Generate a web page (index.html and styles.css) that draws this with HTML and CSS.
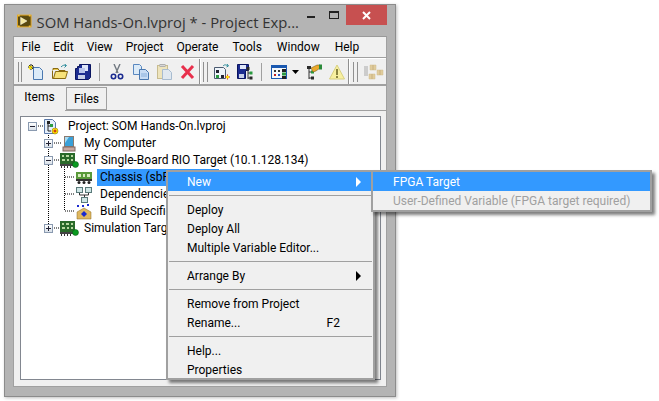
FILE: index.html
```html
<!DOCTYPE html>
<html lang="en">
<head>
    <meta charset="UTF-8">
    <meta name="viewport" content="width=device-width, initial-scale=1.0">
    <title>SOM Hands-On.lvproj</title>
    <link rel="stylesheet" href="styles.css">
</head>
<body>
    <div class="window">
        <div class="titlebar">
            <svg class="app-icon" width="16" height="16" viewBox="0 0 16 16">
                <rect x="0.5" y="1.5" width="15" height="13" fill="#5a4a10" stroke="#e6a820"/>
                <path d="M4 4l7 4-7 4z" fill="#f4e8a0" stroke="#fff" stroke-width="0.5"/>
                <path d="M1 1h2v2H1zM13 1h2v2h-2zM1 13h2v2H1zM13 13h2v2h-2z" fill="#f0c040"/>
            </svg>
            <div class="title">SOM Hands-On.lvproj * - Project Exp...</div>
            <div class="win-btn"><span class="min-glyph"></span></div>
            <div class="win-btn"><span class="max-glyph"></span></div>
            <div class="close-btn">
                <svg width="9" height="9" viewBox="0 0 9 9"><path d="M1 1l7 7M8 1l-7 7" stroke="#fff" stroke-width="2"/></svg>
            </div>
        </div>
        <div class="client">
            <div class="menubar">
                <span>File</span><span>Edit</span><span>View</span><span>Project</span><span>Operate</span><span>Tools</span><span>Window</span><span>Help</span>
            </div>
            <div class="toolbar">
                <span class="grip"></span>
                <span class="tool"><svg width="16" height="16" viewBox="0 0 16 16"><path d="M5.5 3.5h6l3 3v9h-9z" fill="#dcebf8" stroke="#4a78b0"/><path d="M0 3h6M3 0v6M1 1l4 4M5 1L1 5" stroke="#111"/><path d="M1 2l3 3M4 2L1 5" stroke="#ffe800" stroke-width="1.2"/></svg></span>
                <span class="tool"><svg width="16" height="16" viewBox="0 0 16 16"><path d="M0.500 6.500v8h13l2-7h-12l-2 7" fill="#f7e27a" stroke="#8a6a10"/><path d="M1 6V4.500h5l1 2h6V6" fill="#e8c850" stroke="#8a6a10"/><path d="M9 3c2-2 3-2 5-1.500M12.500 0l2 1.500-2 2" fill="none" stroke="#2a8a9a"/></svg></span>
                <span class="tool"><svg width="16" height="16" viewBox="0 0 16 16"><path d="M0.500 4.500h2v-2h2v-2h11v13l-2 2h-13z" fill="#1c2c90" stroke="#0a1560"/><rect x="7" y="1" width="6" height="6" fill="#dfe6f8"/><rect x="4" y="4" width="6" height="5" fill="#b8c4ec"/><rect x="3" y="11" width="7" height="4" fill="#c8d0e8"/></svg></span>
                <span class="tool-sep"></span>
                <span class="tool"><svg width="16" height="16" viewBox="0 0 16 16"><path d="M5 0l4 9M11 0L7 9" stroke="#707880" stroke-width="1.400"/><circle cx="4.500" cy="12.500" r="2.200" fill="none" stroke="#1a2a90" stroke-width="1.600"/><circle cx="11.500" cy="12.500" r="2.200" fill="none" stroke="#1a2a90" stroke-width="1.600"/></svg></span>
                <span class="tool"><svg width="16" height="16" viewBox="0 0 16 16"><path d="M0.500 0.500h6l2 2v8h-8z" fill="#dcebf8" stroke="#5a88c0"/><path d="M6.500 5.500h6l3 3v7h-9z" fill="#c8dcf4" stroke="#4a78b0"/><path d="M8 10h6M8 12h6" stroke="#8ab0dc"/></svg></span>
                <span class="tool"><svg width="16" height="16" viewBox="0 0 16 16"><rect x="1.500" y="1.500" width="10" height="13" fill="#eee4bc" stroke="#c8bc90"/><rect x="4" y="0.500" width="5" height="2" fill="#d8d8d8" stroke="#b0b0b0"/><path d="M6.500 5.500h6l3 3v7h-9z" fill="#e0e8f0" stroke="#a8bcd0"/></svg></span>
                <span class="tool"><svg width="16" height="16" viewBox="0 0 16 16"><path d="M2 2l11 12M13 2L2 14" stroke="#e8304c" stroke-width="3"/></svg></span>
                <span class="bar-end"></span>
                <span class="grip"></span>
                <span class="tool"><svg width="16" height="16" viewBox="0 0 16 16"><path d="M0.500 3.500h9l2 2v9h-11z" fill="#eef4fa" stroke="#4a5a70"/><rect x="2" y="6" width="3" height="3" fill="#223"/><rect x="2" y="11" width="3" height="3" fill="#2a9a40"/><rect x="7" y="11" width="3" height="3" fill="#223"/><path d="M9 2c2-2 3-1 5 0M13 0l1.500 2-2 1" fill="none" stroke="#2a8a9a"/><path d="M11 13h5M13.500 10.500v5" stroke="#d02020"/><circle cx="13.500" cy="13" r="1.500" fill="#ffe800"/></svg></span>
                <span class="tool"><svg width="16" height="16" viewBox="0 0 16 16"><path d="M0.500 0.500h11v6h-3v8h-8z" fill="#1c2c90" stroke="#0a1560"/><rect x="3" y="1" width="6" height="4" fill="#dfe6f8"/><rect x="2" y="10" width="5" height="4" fill="#c8d0e8"/><path d="M11 5v10M11 9h3M11 14h3" stroke="#333"/><rect x="9.500" y="3" width="3" height="3" fill="#2a2a2a"/><rect x="12.500" y="7.500" width="3" height="3" fill="#2a9a40"/><rect x="12.500" y="12.500" width="3" height="3" fill="#2a2a2a"/></svg></span>
                <span class="tool-sep"></span>
                <span class="tool wide"><svg width="16" height="16" viewBox="0 0 16 16"><rect x="0.500" y="1.500" width="15" height="13" fill="#f4f8fc" stroke="#1a58b0"/><rect x="1" y="2" width="14" height="2" fill="#1a58b0"/><path d="M3 6h2v2H3zM7 6h2v2H7z" fill="#333"/><path d="M3 10h2v2H3z" fill="#c02020"/><path d="M7 10h2v2H7z" fill="#2050c0"/><rect x="11" y="5" width="4" height="3" fill="#222"/><rect x="11" y="8.500" width="4" height="3" fill="#2a9a40"/><rect x="11" y="12" width="4" height="3" fill="#222"/></svg><svg class="drop" width="7" height="4" viewBox="0 0 7 4"><path d="M0 0h7L3.500 4z" fill="#000"/></svg></span>
                <span class="tool"><svg width="16" height="16" viewBox="0 0 16 16"><path d="M3 3v12M3 8h3M3 14h3" stroke="#333"/><rect x="1" y="2" width="4" height="3" fill="#2a2a2a"/><rect x="5" y="6.500" width="3" height="3" fill="#2a9a40"/><rect x="5" y="12.500" width="3" height="3" fill="#2a2a2a"/><path d="M5 4l6-3h3v3l-4 3-3 1z" fill="#eaa82a" stroke="#6a5010" stroke-width="0.500"/><rect x="13" y="0.500" width="3" height="5" fill="#2a8a3a"/></svg></span>
                <span class="tool"><svg width="16" height="16" viewBox="0 0 16 16"><path d="M8 1L15.500 15H0.500z" fill="#f8f0a0" stroke="#d8d080"/><path d="M8 5v6" stroke="#8a8440" stroke-width="2"/><path d="M7 12h2v2H7z" fill="#8a8440"/></svg></span>
                <span class="bar-end"></span>
                <span class="grip"></span>
                <span class="tool"><svg width="20" height="16" viewBox="0 0 20 16"><path d="M0 3h4M0 5h4M0 7h4M0 9h4M0 11h4" stroke="#a8a8a8"/><path d="M6 1h6v5H6zM13 6h6v5h-6zM5 10h6v5H5z" fill="#e0cc9c" stroke="#d0bc8c" stroke-width="0.500"/><path d="M9 1v5M16 6v5M8 10v5" stroke="#c8b080"/></svg></span>
            </div>
            <div class="tabs">
                <span class="tab active">Items</span>
                <span class="tab">Files</span>
            </div>
            <div class="panel">
                <div class="tree">
                    <svg class="tree-lines" width="90" height="130" viewBox="0 0 90 130">
                        <path d="M27.500 16v95M43.500 50v44M17 9h7M33 26h7M33 43h7M33 111h7M44 60h10M44 77h10M44 94h10" fill="none" stroke="#000" stroke-dasharray="1 1"/>
                    </svg>
                    <div class="row lvl0"><span class="exp minus"></span>
                        <svg class="ico" width="15" height="16" viewBox="0 0 15 16"><path d="M0.500 0.500h8l3 3v11h-11z" fill="#e4eefa" stroke="#5a78a8"/><path d="M4 3v9M4 7h3M4 12h3" stroke="#222"/><rect x="3" y="2" width="3" height="3" fill="#222"/><rect x="6" y="5" width="3" height="3" fill="#2a9a40"/><circle cx="11" cy="12" r="3" fill="#ffe800" stroke="#806000" stroke-width="0.500"/><path d="M9.500 12h3M11 10.500v3" stroke="#c01010"/></svg>
                        <span class="label">Project: SOM Hands-On.lvproj</span></div>
                    <div class="row lvl1"><span class="exp plus"></span>
                        <svg class="ico pc" width="14" height="16" viewBox="0 0 14 16"><rect x="2.500" y="0.500" width="9" height="10" fill="#3aa0d8" stroke="#8a7a70"/><path d="M3 1h4L3 7z" fill="#a8dcf4"/><rect x="1" y="11" width="12" height="4" fill="#c8a8a0" stroke="#806860"/></svg>
                        <span class="label">My Computer</span></div>
                    <div class="row lvl1"><span class="exp minus"></span>
                        <svg class="ico chip" width="19" height="17" viewBox="0 0 19 17"><rect x="0" y="1" width="15" height="11" fill="#2a6a2a"/><path d="M2 3h2v2H2zM6 3h3v2H6zM11 3h2v2h-2zM2 7h3v2H2zM7 7h2v2H7zM11 7h2v2h-2z" fill="#b8d8a0"/><path d="M0 12h15v2H0z" fill="#444"/><path d="M1 14h1v2H1zM4 14h1v2H4zM7 14h1v2H7zM10 14h1v2h-1z" fill="#333"/><circle cx="15.500" cy="12.500" r="3" fill="#0a9a20" stroke="#065010" stroke-width="0.500"/></svg>
                        <span class="label">RT Single-Board RIO Target (10.1.128.134)</span></div>
                    <div class="row lvl2">
                        <svg class="ico" width="16" height="14" viewBox="0 0 16 14"><rect x="0" y="1" width="16" height="7" fill="#5a9a3a"/><path d="M2 3h3v3H2zM7 3h2v3H7zM11 3h3v3h-3z" fill="#d8ecc0"/><rect x="0" y="8" width="16" height="2" fill="#333"/><circle cx="3" cy="11.500" r="1.500" fill="#222"/><circle cx="8" cy="11.500" r="1.500" fill="#222"/><circle cx="13" cy="11.500" r="1.500" fill="#222"/></svg>
                        <span class="label selected">Chassis (sbRIO-9636)</span></div>
                    <div class="row lvl2">
                        <svg class="ico" width="16" height="16" viewBox="0 0 16 16"><rect x="0.500" y="0.500" width="6" height="5" fill="#cfe6e6" stroke="#5a7a7a"/><rect x="9.500" y="0.500" width="6" height="5" fill="#cfe6e6" stroke="#5a7a7a"/><rect x="5.500" y="10.500" width="6" height="5" fill="#cfe6e6" stroke="#5a7a7a"/><path d="M3.500 6v2h9V6M8.500 8v2" fill="none" stroke="#333"/></svg>
                        <span class="label">Dependencies</span></div>
                    <div class="row lvl2">
                        <svg class="ico" width="16" height="16" viewBox="0 0 16 16"><path d="M1 1h2v2H1zM6 1h2v2H6zM11 0h2v2h-2z" fill="#1a2ad0"/><path d="M1 8l7-4 7 4v7H1z" fill="#e0b860" stroke="#8a6a20" stroke-width="0.500"/><path d="M8 7l3 3-3 3-3-3z" fill="#1a2ad0"/></svg>
                        <span class="label">Build Specifications</span></div>
                    <div class="row lvl1"><span class="exp plus"></span>
                        <svg class="ico chip" width="19" height="17" viewBox="0 0 19 17"><rect x="0" y="1" width="15" height="11" fill="#2a6a2a"/><path d="M2 3h2v2H2zM6 3h3v2H6zM11 3h2v2h-2zM2 7h3v2H2zM7 7h2v2H7zM11 7h2v2h-2z" fill="#b8d8a0"/><path d="M0 12h15v2H0z" fill="#444"/><path d="M1 14h1v2H1zM4 14h1v2H4zM7 14h1v2H7zM10 14h1v2h-1z" fill="#333"/><circle cx="15.500" cy="12.500" r="3" fill="#0a9a20" stroke="#065010" stroke-width="0.500"/></svg>
                        <span class="label">Simulation Target</span></div>
                </div>
            </div>
        </div>
    </div>

    <div class="menu context-menu">
        <div class="item hot"><span>New</span><span class="arrow"></span></div>
        <hr>
        <div class="item">Deploy</div>
        <div class="item">Deploy All</div>
        <div class="item">Multiple Variable Editor...</div>
        <hr>
        <div class="item"><span>Arrange By</span><span class="arrow"></span></div>
        <hr>
        <div class="item">Remove from Project</div>
        <div class="item"><span>Rename...</span><span class="key">F2</span></div>
        <hr>
        <div class="item">Help...</div>
        <div class="item">Properties</div>
    </div>
    <div class="menu sub-menu">
        <div class="item hot">FPGA Target</div>
        <div class="item off">User-Defined Variable (FPGA target required)</div>
    </div>
</body>
</html>
```
FILE: styles.css
```css
body {
    margin: 0;
    background: #fff;
    font-family: Roboto, "Open Sans", sans-serif;
    font-size: 12px;
    color: #000;
}

.window {
    width: 392px;
    height: 393px;
    margin: 4px;
    box-sizing: border-box;
    background: #b4b4b4;
    border: 1px solid #8c8c8c;
    box-shadow: 1px 1px 3px rgba(0, 0, 0, 0.25);
    display: flex;
    flex-direction: column;
    padding: 0 8px 9px;
}

.titlebar {
    height: 31px;
    flex: none;
    display: flex;
    align-items: flex-start;
}

.app-icon {
    margin: 8px 0 0 4px;
}

.title {
    flex: 1;
    font-family: "Open Sans", sans-serif;
    font-size: 14.8px;
    line-height: 20px;
    margin: 7px 0 0 5px;
    color: #333;
    white-space: nowrap;
}

.win-btn {
    width: 26px;
    height: 20px;
    display: flex;
    align-items: center;
    justify-content: center;
}

.min-glyph {
    width: 8px;
    height: 2px;
    margin-top: 4px;
    background: #222;
}

.max-glyph {
    width: 8px;
    height: 5px;
    border: 1px solid #222;
    border-top-width: 2px;
}

.close-btn {
    width: 45px;
    height: 20px;
    background: #c75050;
    display: flex;
    align-items: center;
    justify-content: center;
}

.client {
    flex: 1;
    background: #f0f0f0;
    border: 1px solid #a0a0a0;
    border-top-color: #999;
    display: flex;
    flex-direction: column;
}

.menubar {
    height: 20px;
    padding-left: 1px;
    display: flex;
    align-items: center;
    border-bottom: 1px solid #a0a0a0;
    box-shadow: 0 1px 0 #fff;
}

.menubar span {
    padding: 0 6.5px;
}

.menubar span:nth-child(n+6) {
    padding: 0 7.5px;
}

.toolbar {
    height: 25px;
    margin-top: 1px;
    display: flex;
    align-items: center;
    border-bottom: 2px solid #a0a0a0;
}

.grip {
    width: 3px;
    height: 20px;
    margin: 0 5px 0 4px;
    border-left: 1px solid #909090;
    border-right: 1px solid #909090;
}

.tool {
    width: 23.5px;
    display: flex;
    align-items: center;
    flex: none;
    padding-left: 1px;
    box-sizing: border-box;
}

.tool.wide {
    width: 35px;
}

.drop {
    margin-left: 5px;
}

.tool-sep {
    width: 1px;
    height: 18px;
    background: #a0a0a0;
    margin: 0 8px 0 1.5px;
}

.bar-end {
    width: 1px;
    height: 25px;
    background: #909090;
    margin-left: -3.5px;
    box-shadow: 1px 0 0 #fff;
}

.tabs {
    display: flex;
    align-items: flex-start;
    height: 24px;
    flex: none;
}

.tab {
    height: 23px;
    width: 41px;
    margin-top: 1px;
    box-sizing: border-box;
    border: 1px solid #a0a0a0;
    background: #f0f0f0;
    display: flex;
    align-items: center;
    justify-content: center;
    margin-left: 1px;
}

.tab.active {
    width: 51px;
    height: 25px;
    margin-top: 0;
    margin-left: 0;
    padding-bottom: 3px;
    border: 0;
    position: relative;
}

.panel {
    flex: 1;
    border-top: 1px solid #a0a0a0;
    padding: 5px 5px 6px 6px;
    display: flex;
}

.tree {
    flex: 1;
    position: relative;
    background: #fff;
    border: 1px solid #828790;
    padding-top: 1px;
}

.tree-lines {
    position: absolute;
    left: 0;
    top: 0;
}

.row {
    height: 17px;
    display: flex;
    align-items: center;
    white-space: nowrap;
    position: relative;
}

.lvl0 {
    padding-left: 7px;
}

.lvl1 {
    padding-left: 23px;
}

.lvl2 {
    padding-left: 55px;
}

.exp {
    width: 9px;
    height: 9px;
    box-sizing: border-box;
    border: 1px solid #8a9ab0;
    background: linear-gradient(#fff, #d8e0e8);
    position: relative;
    margin-right: 7px;
    flex: none;
}

.exp::before {
    content: "";
    position: absolute;
    left: 1px;
    top: 3px;
    width: 5px;
    height: 1px;
    background: #223;
}

.exp.plus::after {
    content: "";
    position: absolute;
    left: 3px;
    top: 1px;
    width: 1px;
    height: 5px;
    background: #223;
}

.ico {
    flex: none;
    background: #fff;
}

.pc {
    margin-left: 2px;
}

.label {
    padding: 0 2px;
    line-height: 17px;
}

.lvl0 .label {
    margin-left: 7px;
}

.lvl1 .label {
    margin-left: 6px;
}

.lvl1 .chip + .label {
    margin-left: 3px;
}

.lvl2 .label {
    margin-left: 5px;
    padding: 0 3px;
}

.label.selected {
    background: #3399ff;
}

.menu {
    position: absolute;
    box-sizing: border-box;
    background: #f0f0f0;
    border: 2px solid #a0a0a0;
    box-shadow: 3px 3px 3px rgba(0, 0, 0, 0.5);
}

.context-menu {
    left: 166px;
    top: 170px;
    width: 209px;
    height: 210px;
}

.sub-menu {
    left: 371px;
    top: 170px;
    width: 281px;
    height: 42px;
}

.sub-menu .item {
    padding-left: 20px;
}

.item {
    height: 19px;
    padding: 0 12px 0 19px;
    display: flex;
    align-items: center;
    justify-content: space-between;
}

.hot {
    background: #3399ff;
    color: #fff;
}

.off {
    color: #a0a0a0;
}

.key {
    margin-right: 21px;
}

.arrow {
    width: 0;
    height: 0;
    border-left: 5px solid #000;
    border-top: 5px solid transparent;
    border-bottom: 5px solid transparent;
}

.hot .arrow {
    border-left-color: #fff;
}

hr {
    height: 1px;
    margin: 4px 1px;
    border: 0;
    background: #a0a0a0;
}
```
